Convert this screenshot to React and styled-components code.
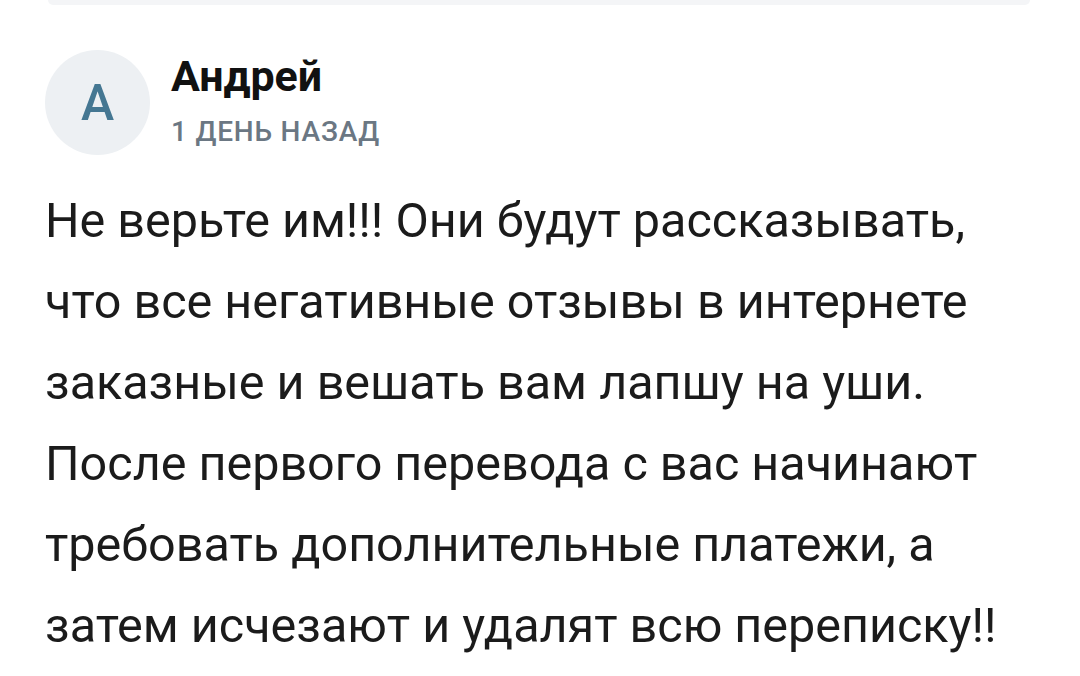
import styled, { createGlobalStyle } from "styled-components";

const GlobalStyle = createGlobalStyle`
  html, body {
    margin: 0;
    padding: 0;
    background: #ffffff;
  }
  body {
    font-family: Roboto, "Noto Sans", Arial, sans-serif;
    -webkit-font-smoothing: antialiased;
  }
`;

const lines = [
  "Не верьте им!!! Они будут рассказывать,",
  "что все негативные отзывы в интернете",
  "заказные и вешать вам лапшу на уши.",
  "После первого перевода с вас начинают",
  "требовать дополнительные платежи, а",
  "затем исчезают и удалят всю переписку!!",
];

const App = () => {
  return (
    <Page>
      <GlobalStyle />
      <PrevCardEdge />
      <Comment>
        <Header>
          <Avatar>А</Avatar>
          <Meta>
            <Author>Андрей</Author>
            <Time>1 день назад</Time>
          </Meta>
        </Header>
        <Body>
          {lines.map((line) => (
            <Line key={line}>{line}</Line>
          ))}
        </Body>
      </Comment>
    </Page>
  );
};

export default App;

const Page = styled.div`
  width: 1080px;
  height: 676px;
  overflow: hidden;
  background: #fff;
`;

const PrevCardEdge = styled.div`
  margin: 0 50px 0 48px;
  height: 5px;
  background: #f4f5f7;
  border-radius: 0 0 14px 14px;
`;

const Comment = styled.div`
  padding: 45px 44px 0 45px;
`;

const Header = styled.div`
  display: flex;
  align-items: flex-start;
  gap: 21px;
`;

const Avatar = styled.div`
  width: 105px;
  height: 105px;
  flex-shrink: 0;
  border-radius: 50%;
  background: #edf0f3;
  color: #457792;
  display: flex;
  align-items: center;
  justify-content: center;
  font-size: 50px;
  font-weight: 500;
  line-height: 1;
`;

const Meta = styled.div`
  display: flex;
  flex-direction: column;
  padding-top: 2px;
`;

const Author = styled.div`
  font-size: 43px;
  font-weight: 700;
  line-height: 48px;
  color: #111111;
`;

const Time = styled.div`
  margin-top: 14px;
  font-size: 28px;
  font-weight: 500;
  line-height: 36px;
  letter-spacing: 0.8px;
  text-transform: uppercase;
  color: #6b7783;
`;

const Body = styled.div`
  margin-top: 25px;
  font-size: 48.5px;
  line-height: 81px;
  color: #1b1b1b;
`;

const Line = styled.div`
  white-space: nowrap;
`;
